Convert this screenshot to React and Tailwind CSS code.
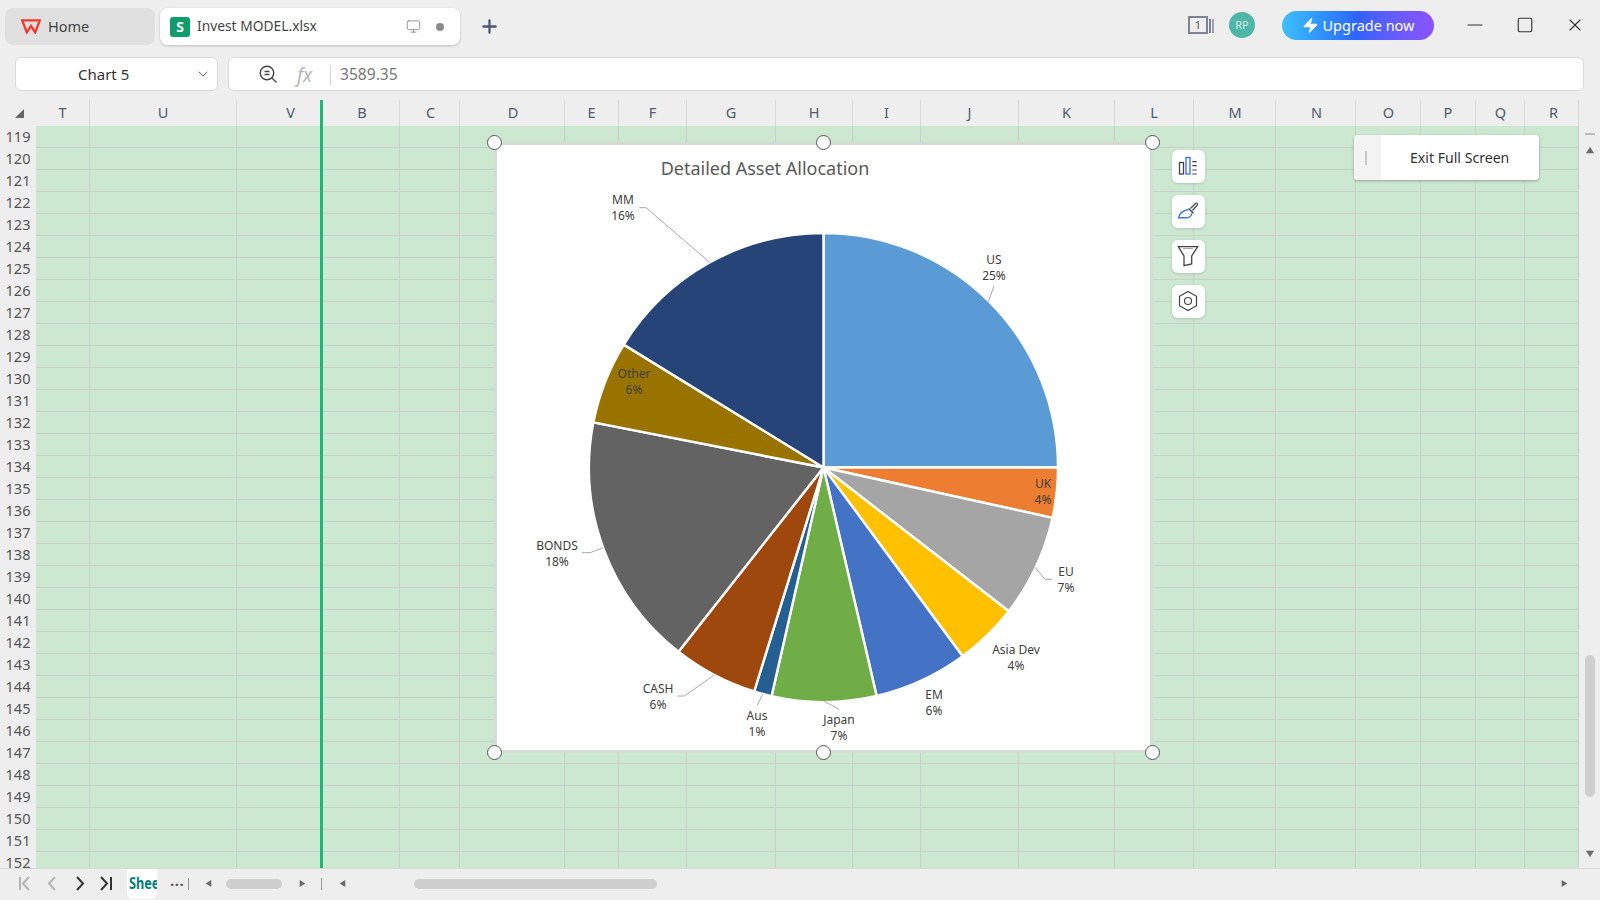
import React from "react";
import { Monitor, Plus, Minus, Square, X, ChevronDown, Zap } from "lucide-react";

const columns = [
  ["T", "w-[54px]", ""], ["U", "w-[147px]", ""], ["V", "w-[84px]", "pl-[24px]"], ["B", "w-[79px]", "pl-[4px]"], ["C", "w-[60px]", "pl-[2px]"],
  ["D", "w-[105px]", "pl-[2px]"], ["E", "w-[54px]", ""], ["F", "w-[68px]", ""], ["G", "w-[89px]", ""], ["H", "w-[77px]", ""],
  ["I", "w-[68px]", ""], ["J", "w-[98px]", ""], ["K", "w-[96px]", ""], ["L", "w-[79px]", ""], ["M", "w-[82px]", "pl-[1px]"],
  ["N", "w-[80px]", "pl-[2px]"], ["O", "w-[65px]", "pl-[1px]"], ["P", "w-[55px]", ""], ["Q", "w-[49px]", "pl-[1px]"], ["R", "w-[54px]", "pl-[4px]"],
];
const rows = Array.from({ length: 34 }, (_, i) => 119 + i);

const CX = 823.5;
const CY = 467.5;
const R = 234.5;
const slices = [
  [0, 90, "#5b9bd5"], [90, 102.4, "#ed7d31"], [102.4, 127.8, "#a5a5a5"], [127.8, 143.6, "#ffc000"],
  [143.6, 166.9, "#4472c4"], [166.9, 192.8, "#70ad47"], [192.8, 197.2, "#255e91"], [197.2, 218.2, "#9e480e"],
  [218.2, 281.1, "#636363"], [281.1, 301.6, "#997300"], [301.6, 360, "#264478"],
];
const pt = (a) => {
  const r = (a * Math.PI) / 180;
  return [CX + R * Math.sin(r), CY - R * Math.cos(r)];
};
const slicePath = (a, b) => {
  const [x1, y1] = pt(a);
  const [x2, y2] = pt(b);
  return `M${CX} ${CY}L${x1} ${y1}A${R} ${R} 0 ${b - a > 180 ? 1 : 0} 1 ${x2} ${y2}Z`;
};

const leaders = [
  "639.3,207.7 646,207.7 710,262.7",
  "994,286 988.3,301.7",
  "1052.3,579.3 1045,579.3 1035,567.3",
  "839,709.3 824.3,701.3",
  "762.7,694.3 757.3,705",
  "677.3,696 684.3,696 714.3,675",
  "581.7,552.7 590,552.7 603.3,547.7",
];

const labels = [
  ["MM", "16%", "left-[583px] top-[192px]"],
  ["Other", "6%", "left-[594px] top-[366px]"],
  ["US", "25%", "left-[954px] top-[252px]"],
  ["UK", "4%", "left-[1003px] top-[476px]"],
  ["EU", "7%", "left-[1026px] top-[564px]"],
  ["Asia Dev", "4%", "left-[976px] top-[642px]"],
  ["EM", "6%", "left-[894px] top-[687px]"],
  ["Japan", "7%", "left-[799px] top-[712px]"],
  ["Aus", "1%", "left-[717px] top-[708px]"],
  ["CASH", "6%", "left-[618px] top-[681px]"],
  ["BONDS", "18%", "left-[517px] top-[538px]"],
];

const handles = [
  "left-[487px] top-[135px]", "left-[816px] top-[135px]", "left-[1145px] top-[135px]",
  "left-[487px] top-[745px]", "left-[816px] top-[745px]", "left-[1145px] top-[745px]",
];

function Tri({ dir, className }) {
  const pts = { up: "5,1 10,9 0,9", down: "0,1 10,1 5,9", left: "9,0 9,10 1,5", right: "1,0 1,10 9,5" }[dir];
  return (
    <svg viewBox="0 0 10 10" className={className}>
      <polygon points={pts} fill="#6b6b6b" />
    </svg>
  );
}

function ToolButton({ children, className }) {
  return (
    <div className={`absolute left-[1172px] w-[33px] h-[33px] bg-white rounded-[6px] shadow-[0_1px_3px_rgba(0,0,0,0.15)] ${className}`}>
      <svg viewBox="0 0 33 33" className="w-[33px] h-[33px]" fill="none">
        {children}
      </svg>
    </div>
  );
}

export default function App() {
  return (
    <div className="relative w-[1600px] h-[900px] overflow-hidden bg-[#eeeeee] font-['Open_Sans',sans-serif] text-[#444]">
      {/* Tabs */}
      <div className="absolute left-[5px] top-[8px] w-[150px] h-[37px] rounded-[8px] bg-[#e0e0e0]">
        <svg viewBox="0 0 20 15" className="absolute left-[16px] top-[11px] w-[20px] h-[15px]">
          <path d="M1.2 1.4h17.6l-4.6 12-4.2-6.6-4.2 6.6z" fill="none" stroke="#f0392b" strokeWidth="2.3" strokeLinejoin="miter" />
        </svg>
        <span className="absolute left-[43px] top-[8px] text-[14.5px] leading-[20px] text-[#444]">Home</span>
      </div>
      <div className="absolute left-[160px] top-[8px] w-[300px] h-[37px] rounded-[8px] bg-white shadow-[0_1px_3px_rgba(0,0,0,0.2)] flex items-center pl-[10px]">
        <div className="w-[20px] h-[20px] rounded-[3px] bg-[#0f9d6c] flex items-center justify-center text-white font-bold text-[14px] leading-none">S</div>
        <span className="ml-[7px] text-[13.8px] text-[#444] whitespace-nowrap">Invest MODEL.xlsx</span>
        <Monitor className="absolute left-[246px] top-[11px] w-[15px] h-[15px] text-[#8a8a8a]" strokeWidth={1.4} />
        <div className="absolute left-[276px] top-[15px] w-[8px] h-[8px] rounded-full bg-[#8a8a8a]" />
      </div>
      <Plus className="absolute left-[479px] top-[16px] w-[21px] h-[21px] text-[#4b5876]" strokeWidth={2.6} />

      {/* Window controls */}
      <div className="absolute left-[1188px] top-[16px] w-[27px] h-[19px]">
        <div className="absolute left-0 top-0 w-[20px] h-[18px] border-2 border-[#7b8497] text-[11px] leading-[14px] text-center text-[#555]">1</div>
        <div className="absolute left-[21px] top-[3px] w-[1.5px] h-[14px] bg-[#7b8497]" />
        <div className="absolute left-[24px] top-[3px] w-[1.5px] h-[14px] bg-[#9aa2b2]" />
      </div>
      <div className="absolute left-[1229px] top-[12px] w-[26px] h-[26px] rounded-full bg-[#4db6a6] flex items-center justify-center text-[11px] text-[#d6f0ea]">RP</div>
      <div className="absolute left-[1282px] top-[11px] w-[152px] h-[29px] rounded-full bg-gradient-to-r from-[#40c0ff] via-[#2f62ff] to-[#8a52ff] flex items-center justify-center gap-[4px] text-white text-[14.5px]">
        <Zap className="w-[17px] h-[17px] fill-white text-white" strokeWidth={1} />
        <span>Upgrade now</span>
      </div>
      <Minus className="absolute left-[1463px] top-[13px] w-[24px] h-[24px] text-[#333]" strokeWidth={1.2} />
      <Square className="absolute left-[1516px] top-[16px] w-[18px] h-[18px] text-[#333]" strokeWidth={1.5} />
      <X className="absolute left-[1565px] top-[15px] w-[20px] h-[20px] text-[#333]" strokeWidth={1.3} />

      {/* Name box and formula bar */}
      <div className="absolute left-[15px] top-[57px] w-[203px] h-[34px] bg-white rounded-[6px] border border-[#d9d9d9] flex items-center">
        <span className="absolute left-[62px] text-[15px] text-[#333] font-['Liberation_Sans',sans-serif]">Chart 5</span>
        <ChevronDown className="absolute left-[179px] top-[8px] w-[16px] h-[16px] text-[#666]" strokeWidth={1.5} />
      </div>
      <div className="absolute left-[228px] top-[57px] w-[1356px] h-[34px] bg-white rounded-[6px] border border-[#d9d9d9]">
        <svg viewBox="0 0 20 20" className="absolute left-[29px] top-[6px] w-[20px] h-[20px]" fill="none" stroke="#444" strokeWidth="1.4">
          <circle cx="9" cy="9" r="6.8" />
          <path d="M14 14l4.5 4.5M6.5 7.5h5M6.5 10.5h5" />
        </svg>
        <span className="absolute left-[68px] top-[3px] text-[19px] italic text-[#b5b5b5] font-['Liberation_Serif',serif]">fx</span>
        <div className="absolute left-[101px] top-[7px] w-px h-[20px] bg-[#d5d5d5]" />
        <span className="absolute left-[111px] top-[5px] text-[15.6px] text-[#777]">3589.35</span>
      </div>

      {/* Column header */}
      <div className="absolute left-0 top-[100px] w-[1579px] h-[26px] flex">
        <div className="w-[36px] relative">
          <svg viewBox="0 0 10 10" className="absolute left-[14px] top-[8px] w-[10px] h-[10px]">
            <polygon points="10,1 10,10 1,10" fill="#666" />
          </svg>
        </div>
        {columns.map(([l, w, p]) => (
          <div key={l} className={`${w} ${p} border-r border-[#d9d9d9] flex items-center justify-center text-[14.5px] text-[#4f5b6e]`}>{l}</div>
        ))}
      </div>

      {/* Sheet */}
      <div className="absolute left-0 top-[126px] w-[1579px] h-[742px] overflow-hidden flex flex-col">
        {rows.map((r) => (
          <div key={r} className="flex h-[22px] shrink-0">
            <div className="w-[36px] shrink-0 flex items-center justify-center pb-[1px] text-[14.5px] text-[#555] bg-[#eeeeee]">{r}</div>
            {columns.map(([l, w]) => (
              <div key={l} className={`${w} shrink-0 bg-[#cde8d1] border-r border-b border-[#c9cfca]`} />
            ))}
          </div>
        ))}
      </div>

      {/* Freeze line */}
      <div className="absolute left-[320px] top-[100px] w-[3px] h-[768px] bg-[#1fb574]" />

      {/* Chart */}
      <div className="absolute left-[494px] top-[142px] w-[659px] h-[611px] bg-white border-[3px] border-[#d4dcd6]" />
      <div className="absolute left-[497px] top-[156px] w-[536px] text-center font-['Lato',sans-serif] text-[18px] leading-[24px] text-[#595959]">Detailed Asset Allocation</div>
      <svg viewBox="0 0 1600 900" className="absolute left-0 top-0 w-[1600px] h-[900px] pointer-events-none">
        {slices.map(([a, b, c]) => (
          <path key={a} d={slicePath(a, b)} fill={c} stroke="#ffffff" strokeWidth="2.4" strokeLinejoin="round" />
        ))}
        {leaders.map((p) => (
          <polyline key={p} points={p} fill="none" stroke="#a6a6a6" strokeWidth="1" />
        ))}
      </svg>
      {labels.map(([a, b, pos]) => (
        <div key={a} className={`absolute ${pos} w-[80px] text-center font-['Lato',sans-serif] text-[12px] leading-[16px] text-[#404040]`}>
          <div>{a}</div>
          <div>{b}</div>
        </div>
      ))}
      {handles.map((h) => (
        <div key={h} className={`absolute ${h} w-[15px] h-[15px] rounded-full bg-white border border-[#555]`} />
      ))}

      {/* Chart tools */}
      <ToolButton className="top-[150px]">
        <rect x="7.5" y="12.5" width="4" height="11.5" stroke="#444" strokeWidth="1.3" />
        <rect x="14" y="7.5" width="4" height="16.5" stroke="#3f74f0" strokeWidth="1.4" />
        <path d="M20.3 11.7h4.4M20.3 15.7h4.4M20.3 20h4.4M20.3 24h4.4" stroke="#444" strokeWidth="1.2" />
      </ToolButton>
      <ToolButton className="top-[195px]">
        <path d="M18.5 13.5l5-5c1-.9 2.5.4 1.7 1.6L20.5 15.5" stroke="#444" strokeWidth="1.2" />
        <path d="M16.5 13.5l5 4.8" stroke="#444" strokeWidth="1.3" />
        <path d="M16.5 14.5c-4 .8-9 3.5-10 8.2h8.5c2.6 0 4.5-2 5-4.5" stroke="#3f74f0" strokeWidth="1.4" />
      </ToolButton>
      <ToolButton className="top-[240px]">
        <path d="M6.3 6.7H25.7L19.7 16v8l-7.7 1.7V16z" stroke="#444" strokeWidth="1.3" />
        <path d="M11 8.5h10" stroke="#aaa" strokeWidth="1.2" />
      </ToolButton>
      <ToolButton className="top-[285px]">
        <path d="M16 6.5l8.5 4.8v9.4L16 25.5l-8.5-4.8v-9.4z" stroke="#444" strokeWidth="1.2" />
        <circle cx="16" cy="16" r="3.5" stroke="#444" strokeWidth="1.2" />
      </ToolButton>

      {/* Exit full screen */}
      <div className="absolute left-[1354px] top-[135px] w-[185px] h-[45px] bg-white rounded-[4px] shadow-[0_1px_3px_rgba(0,0,0,0.3)] flex overflow-hidden">
        <div className="w-[27px] bg-[#f3f3f3] flex items-center justify-center">
          <div className="w-[2px] h-[14px] bg-[#c8c8c8] -ml-[4px]" />
        </div>
        <span className="ml-[29px] self-center text-[14.1px] text-[#333] whitespace-nowrap">Exit Full Screen</span>
      </div>

      {/* Vertical scrollbar */}
      <div className="absolute left-[1585px] top-[133px] w-[10px] h-[1.5px] bg-[#bdbdbd]" />
      <Tri dir="up" className="absolute left-[1586px] top-[146px] w-[8px] h-[8px]" />
      <div className="absolute left-[1585px] top-[655px] w-[10px] h-[142px] rounded-full bg-[#cfcfcf]" />
      <Tri dir="down" className="absolute left-[1586px] top-[850px] w-[8px] h-[8px]" />

      {/* Bottom bar */}
      <div className="absolute left-0 top-[868px] w-[1600px] h-[32px] border-t border-[#d9d9d9]">
        <svg viewBox="0 0 100 20" className="absolute left-[17px] top-[5px] w-[100px] h-[20px]" fill="none" strokeWidth="2">
          <path d="M3 3v13M12 3l-6 6.5 6 6.5" stroke="#b5b5b5" />
          <path d="M38 3l-6 6.5 6 6.5" stroke="#b5b5b5" />
          <path d="M60 3l6 6.5-6 6.5" stroke="#333" />
          <path d="M84 3l6 6.5-6 6.5M94 3v13" stroke="#333" />
        </svg>
        <div className="absolute left-[127px] top-0 w-[30px] h-[30px] bg-white rounded-b-[6px] overflow-hidden flex items-center pl-[2px]">
          <span className="text-[15.5px] font-bold text-[#00807a] whitespace-nowrap scale-x-[0.82] origin-left">Shee</span>
        </div>
        <span className="absolute left-[170px] top-[5px] text-[15px] font-bold leading-[20px] tracking-[0.5px] text-[#555]">···</span>
        <div className="absolute left-[188px] top-[9px] w-px h-[12px] bg-[#999]" />
        <Tri dir="left" className="absolute left-[205px] top-[11px] w-[7px] h-[7px]" />
        <div className="absolute left-[226px] top-[10px] w-[56px] h-[10px] rounded-full bg-[#cfcfcf]" />
        <Tri dir="right" className="absolute left-[299px] top-[11px] w-[7px] h-[7px]" />
        <div className="absolute left-[321px] top-[9px] w-px h-[12px] bg-[#999]" />
        <Tri dir="left" className="absolute left-[339px] top-[11px] w-[7px] h-[7px]" />
        <div className="absolute left-[414px] top-[10px] w-[243px] h-[10px] rounded-full bg-[#cfcfcf]" />
        <Tri dir="right" className="absolute left-[1561px] top-[11px] w-[7px] h-[7px]" />
      </div>
    </div>
  );
}
